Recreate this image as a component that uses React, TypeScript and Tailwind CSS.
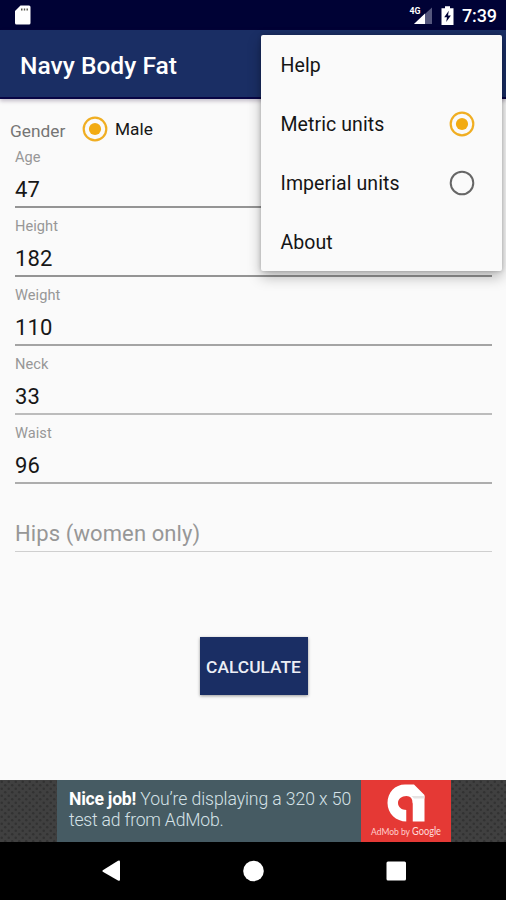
const fields = [
  { label: "Age", value: "47", line: "bg-[#949494]" },
  { label: "Height", value: "182", line: "bg-[#949494]" },
  { label: "Weight", value: "110", line: "bg-[#a4a4a4]" },
  { label: "Neck", value: "33", line: "bg-[#bcbcbc]" },
  { label: "Waist", value: "96", line: "bg-[#adadad]" },
]

const menuItems = [
  { label: "Help" },
  { label: "Metric units", checked: true },
  { label: "Imperial units", checked: false },
  { label: "About" },
]

function Radio({ checked }: { checked: boolean }) {
  return (
    <svg className="h-[26px] w-[26px] shrink-0" viewBox="0 0 26 26" fill="none">
      <circle cx="13" cy="13" r="11.3" stroke={checked ? "#f0ae22" : "#666666"} strokeWidth={checked ? 2.2 : 2} />
      {checked && <circle cx="13" cy="13" r="6.1" fill="#f2ab12" />}
    </svg>
  )
}

function StatusBar() {
  return (
    <div className="flex h-[30px] items-center bg-[#000235] pl-[14px] pr-[9px] text-white">
      <svg className="h-5 w-[17px]" viewBox="0 0 17 20">
        <path d="M6.5 0.5H15Q16.5 0.5 16.5 2V18Q16.5 19.5 15 19.5H2.5Q1 19.5 1 18V6Z" fill="#fff" />
        <path d="M7 4.5h1.5M9.8 4.5h1.4M12.5 4.5h1.4" stroke="#55554a" strokeWidth="1.8" />
      </svg>
      <div className="flex-1" />
      <svg className="h-5 w-6" viewBox="0 0 24 20">
        <path d="M24 2.5V19H6Z" fill="#55577d" />
        <path d="M17 8.5V19H6Z" fill="#fff" />
        <text x="1.5" y="8.5" fill="#fff" fontSize="9.5" fontWeight="700" textLength="11" lengthAdjust="spacingAndGlyphs">4G</text>
      </svg>
      <svg className="ml-[9px] mr-[8px] h-[19px] w-[13px]" viewBox="0 0 13 19">
        <path d="M4 0.3h5v2h3.5V19H0.5V2.3H4Z" fill="#fff" />
        <path d="M7.8 4.8L3.2 11.3H6L5.2 16L9.9 9.4H7Z" fill="#000235" />
      </svg>
      <span className="mt-px text-[18px] font-medium leading-[30px] tracking-[-0.1px]">7:39</span>
    </div>
  )
}

function OverflowMenu() {
  return (
    <div className="absolute left-[261px] top-[35px] h-[236px] w-[241px] rounded-[2px] bg-[#fafafa] text-[#151515] shadow-[0_6px_14px_rgba(0,0,0,0.28),0_0_4px_rgba(0,0,0,0.22)]">
      {menuItems.map((item) => (
        <div key={item.label} className="flex h-[59px] items-center justify-between pl-[19.5px] pr-[27px] text-[19.5px] leading-6 tracking-[0.08px]">
          <span className="mt-[3px]">{item.label}</span>
          {item.checked !== undefined && <Radio checked={item.checked} />}
        </div>
      ))}
    </div>
  )
}

function MeshStrip({ side }: { side: string }) {
  return (
    <svg className="h-full flex-1">
      <defs>
        <pattern id={`mesh-${side}`} width="7" height="7" patternUnits="userSpaceOnUse">
          <rect width="7" height="7" fill="#404040" />
          <circle cx="1.75" cy="1.75" r="1.3" fill="#323232" />
          <circle cx="5.25" cy="5.25" r="1.3" fill="#323232" />
        </pattern>
      </defs>
      <rect width="100%" height="100%" fill={`url(#mesh-${side})`} />
    </svg>
  )
}

function AdBanner() {
  return (
    <div className="flex h-[62px]">
      <MeshStrip side="left" />
      <div className="w-[304px] bg-[#465b63] pl-3 pt-[9px] text-[17.6px] font-light leading-[20px] text-[#d5e2e7]">
        <div className="whitespace-nowrap tracking-[-0.08px]">
          <b className="font-bold tracking-[-0.25px] text-white">Nice job!</b> You’re displaying a 320 x 50
        </div>
        <div className="mt-px tracking-[-0.2px]">test ad from AdMob.</div>
      </div>
      <svg className="h-[62px] w-[90px] bg-[#e53935]" viewBox="0 0 90 62">
        <path d="M45.5 41.5C35 41.5 26.5 33.5 26.5 23C26.5 12.5 34 4.5 44 4.5H53L63.5 15V41.5H51.5V23Q51.5 16 45.5 16C40.5 16 37 19 37 23C37 27.2 40.7 30 45.5 30Z" fill="#fff" />
        {/* slit between the bowl and the stem */}
        <path d="M45.5 29.5V42H51.5V23Z" fill="#e53935" />
        <path d="M50.5 16H63.5V18.5H53Z" fill="#e6e3e3" />
        <text x="10" y="55" fill="#ffcfcd" fontSize="9.5" fontFamily="Lato, sans-serif" textLength="39" lengthAdjust="spacingAndGlyphs">AdMob by</text>
        <text x="51" y="55" fill="#ffdcda" fontSize="10.5" fontFamily="Lato, sans-serif" textLength="29" lengthAdjust="spacingAndGlyphs">Google</text>
      </svg>
      <div className="flex w-[55px]">
        <MeshStrip side="right" />
      </div>
    </div>
  )
}

function NavBar() {
  return (
    <div className="flex h-[58px] items-center bg-black pl-[101px]">
      <svg className="h-6 w-[305px]" viewBox="0 0 305 24" fill="#fff">
        <path d="M17 1.8Q19 0.8 19 2.8V20.7Q19 22.5 17 21.5L1.8 12.7Q0.8 12 1.8 11.3Z" />
        <circle cx="152.5" cy="12" r="10.3" />
        <rect x="285.5" y="2.5" width="19.5" height="19" rx="1.5" />
      </svg>
    </div>
  )
}

export default function App() {
  return (
    <div className="relative flex h-[900px] w-[506px] flex-col overflow-hidden bg-[#fafafa] font-[Roboto,sans-serif]">
      <StatusBar />
      <header className="flex h-[69px] items-center border-b-2 border-[#080544] bg-[#1a2e64] pl-5 pt-1 shadow-[0_2px_4px_rgba(60,40,80,0.3)]">
        <h1 className="text-[24.6px] font-medium leading-8 text-white">Navy Body Fat</h1>
      </header>

      <main className="flex-1">
        <div className="flex h-12 items-center pl-[10px] pt-[11px]">
          <span className="mt-1 w-[72px] text-[17.3px] leading-6 text-[#757575]">Gender</span>
          <Radio checked />
          <span className="ml-[7px] text-[17.3px] leading-6 text-[#171717]">Male</span>
        </div>

        <div className="pl-[15px] pr-[14px]">
          {fields.map((field) => (
            <div key={field.label} className="h-[68.9px] pt-px">
              <div className="h-[18px] text-[14.6px] leading-[18px] tracking-[0.05px] text-[#979797]">{field.label}</div>
              <div className="mt-2 h-8 text-[22px] leading-8 tracking-[0.1px] text-[#171717]">{field.value}</div>
              <div className={`h-[2px] ${field.line}`} />
            </div>
          ))}
          <div className="h-[60.5px] border-b border-[#cfcfcf] pt-[27px] text-[22px] leading-8 tracking-[0.11px] text-[#979797]">
            Hips (women only)
          </div>
        </div>

        <button className="ml-[199.5px] mt-[85px] block h-[58px] w-[108px] whitespace-nowrap bg-[#1a2e64] pt-0.5 text-[17.4px] font-medium leading-6 text-[#eceef5] shadow-[0_1px_3px_rgba(0,0,0,0.4)]">
          CALCULATE
        </button>
      </main>

      <AdBanner />
      <NavBar />
      <OverflowMenu />
    </div>
  )
}
